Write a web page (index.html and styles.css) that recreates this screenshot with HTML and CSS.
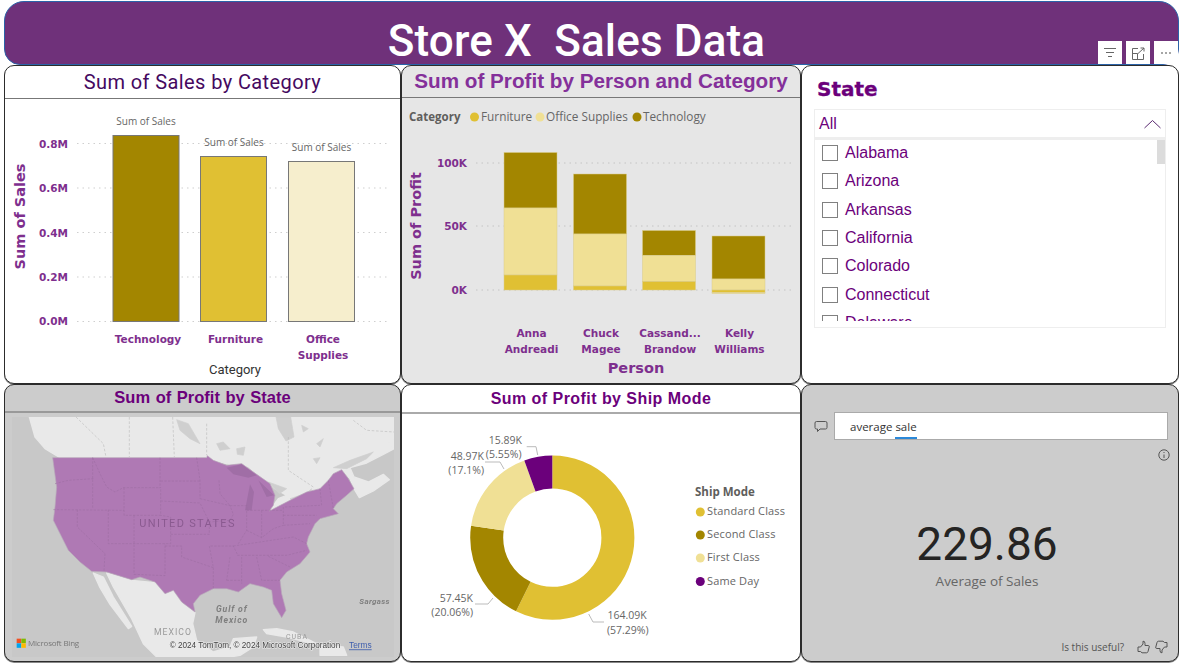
FILE: index.html
```html
<!DOCTYPE html>
<html lang="en">
<head>
<meta charset="utf-8">
<title>Store X Sales Data</title>
<link rel="stylesheet" href="styles.css">
</head>
<body>
<div class="page">
  <header class="banner">
    <h1 class="banner-title">Store X&nbsp; Sales Data</h1>
    <div class="visual-actions">
      <span class="action"><svg width="24" height="23" viewBox="0 0 24 23"><path class="ico" d="M6 7.5H18M8 11.5H16M10 15.5H14"/></svg></span>
      <span class="action"><svg width="24" height="23" viewBox="0 0 24 23"><path class="ico" d="M12 7.5H6.5V18.5H17.5V13M6.5 12.5H11.5V18.5M11.5 13L18 7M14.5 7H18V10.5"/></svg></span>
      <span class="action"><svg width="24" height="23" viewBox="0 0 24 23"><circle class="dot" cx="8" cy="12" r="1"/><circle class="dot" cx="12" cy="12" r="1"/><circle class="dot" cx="16" cy="12" r="1"/></svg></span>
    </div>
  </header>

  <main class="board">
    <section class="card">
      <h2 class="card-title title-din">Sum of Sales by Category</h2>
      <svg class="chart" width="395" height="284" viewBox="5 99 395 284">
        <g class="grid">
          <path d="M77 143.5H390M77 188H390M77 232.5H390M77 277H390M77 321.5H390"/>
        </g>
        <rect class="bar dk" x="113" y="135.5" width="66" height="186"/>
        <rect class="bar md" x="200.5" y="156.5" width="66" height="165"/>
        <rect class="bar pl" x="288.5" y="161.5" width="66" height="160"/>
        <g class="data-label">
          <text x="146" y="125">Sum of Sales</text>
          <text x="234" y="146">Sum of Sales</text>
          <text x="321.5" y="151">Sum of Sales</text>
        </g>
        <g class="tick end">
          <text x="68" y="147.5">0.8M</text>
          <text x="68" y="192">0.6M</text>
          <text x="68" y="236.5">0.4M</text>
          <text x="68" y="281">0.2M</text>
          <text x="68" y="325">0.0M</text>
        </g>
        <text class="axis-title" transform="translate(25 216.5) rotate(-90)">Sum of Sales</text>
        <g class="tick mid">
          <text x="148" y="343">Technology</text>
          <text x="235.5" y="343">Furniture</text>
          <text x="323" y="343">Office</text>
          <text x="323" y="359">Supplies</text>
        </g>
        <text class="axis-din" x="235" y="374">Category</text>
      </svg>
    </section>

    <section class="card card-light">
      <h2 class="card-title title-large">Sum of Profit by Person and Category</h2>
      <svg class="chart" width="398" height="285" viewBox="402 98 398 285">
        <g class="legend">
          <text class="legend-head" x="409" y="121">Category</text>
          <circle class="f-md" cx="474.5" cy="117" r="4.5"/>
          <text x="481" y="121">Furniture</text>
          <circle class="f-lt" cx="540" cy="117" r="4.5"/>
          <text x="546" y="121">Office Supplies</text>
          <circle class="f-dk" cx="637" cy="117" r="4.5"/>
          <text x="643" y="121">Technology</text>
        </g>
        <g class="grid"><path d="M476 163H795M476 226H795M476 290H795"/></g>
        <g class="stack">
          <rect class="f-dk" x="504" y="152.5" width="53" height="55.5"/>
          <rect class="f-lt" x="504" y="208" width="53" height="67"/>
          <rect class="f-md" x="504" y="275" width="53" height="15"/>
          <rect class="f-dk" x="573.5" y="174" width="53" height="60"/>
          <rect class="f-lt" x="573.5" y="234" width="53" height="52"/>
          <rect class="f-md" x="573.5" y="286" width="53" height="4"/>
          <rect class="f-dk" x="642.5" y="230.5" width="53" height="25"/>
          <rect class="f-lt" x="642.5" y="255.5" width="53" height="26"/>
          <rect class="f-md" x="642.5" y="281.5" width="53" height="8.5"/>
          <rect class="f-dk" x="712" y="236" width="53" height="43"/>
          <rect class="f-lt" x="712" y="279" width="53" height="11"/>
          <rect class="f-md" x="712" y="290" width="53" height="2.5"/>
          <rect class="f-lt" x="712" y="292.5" width="53" height="1"/>
        </g>
        <g class="tick end">
          <text x="467" y="167">100K</text>
          <text x="467" y="230">50K</text>
          <text x="467" y="294">0K</text>
        </g>
        <text class="axis-title" transform="translate(421 226) rotate(-90)">Sum of Profit</text>
        <g class="tick mid">
          <text x="531.5" y="337">Anna</text>
          <text x="531.5" y="353">Andreadi</text>
          <text x="601" y="337">Chuck</text>
          <text x="601" y="353">Magee</text>
          <text x="670" y="337">Cassand...</text>
          <text x="670" y="353">Brandow</text>
          <text x="739.5" y="337">Kelly</text>
          <text x="739.5" y="353">Williams</text>
        </g>
        <text class="axis-person" x="636" y="373">Person</text>
      </svg>
    </section>

    <section class="card slicer">
      <h2 class="slicer-title">State</h2>
      <div class="dropdown">
        <span>All</span>
        <svg width="17" height="10" viewBox="0 0 17 10"><path class="chev" d="M0.5 9L8.5 1.5L16.5 9"/></svg>
      </div>
      <div class="list">
        <div class="list-clip">
          <div class="row"><span class="box"></span>Alabama</div>
          <div class="row"><span class="box"></span>Arizona</div>
          <div class="row"><span class="box"></span>Arkansas</div>
          <div class="row"><span class="box"></span>California</div>
          <div class="row"><span class="box"></span>Colorado</div>
          <div class="row"><span class="box"></span>Connecticut</div>
          <div class="row"><span class="box"></span>Delaware</div>
        </div>
        <span class="thumb"></span>
      </div>
    </section>

    <section class="card card-grey">
      <h2 class="card-title title-map">Sum of Profit by State</h2>
      <div class="map-wrap">
        <svg class="map" width="382" height="240" viewBox="36 110 1146 720">
          <rect class="ocean" x="36" y="110" width="1146" height="720"/>
          <path class="land" d="M88 110L105 170L135 205L180 232L620 232L640 240L700 255L725 250L770 285L805 305L825 325L860 345L835 355L808 392L870 360L920 340L960 325L985 300L1000 280L1025 268L1050 295L1062 325L1078 352L1120 332L1168 298L1150 282L1105 305L1062 290L1050 262L1100 248L1150 222L1182 205V110Z"/>
          <path class="land" d="M280 578L310 590L340 650L395 738L385 745L330 672L300 622ZM320 578L395 600L465 607L495 642L520 632L545 667L585 697L578 730L590 780L640 815L690 800L700 775L770 770L760 800L720 825L690 830H470L430 790L395 715L340 620ZM790 748L830 745L880 755L950 790L920 785L860 770L800 760ZM960 795L1030 800L1040 825H960ZM1070 120L1110 150L1085 165L1060 140ZM1182 178V200L1165 190Z"/>
          <path class="water" d="M828 110H872L882 170L858 182L835 145ZM530 118L565 130L600 190L570 175L540 150ZM650 190L670 185L690 205L660 210ZM710 205L735 200L730 225L712 222ZM940 235L960 232L950 250ZM950 190L970 175L960 200ZM1000 262L1050 240L1120 215L1100 235L1040 265ZM680 258L725 250L770 285L745 262L720 256ZM805 305L860 325L838 340ZM870 355L920 338L935 325L925 345L880 360ZM905 135L925 145L910 155Z"/>
          <path class="border-ca" d="M228 110L310 190L318 230M388 110V230M518 110L523 230M620 130V225M865 170V270L940 320M1060 120L1100 150L1182 155"/>
          <path class="us" d="M158 232H620L622 226L640 240L680 255L725 250L770 282L790 296L810 310L825 345L820 375L808 392L870 360L920 335L960 325L985 300L1000 280L1025 268L1045 295L1062 325L1040 345L1010 370L1000 385L1015 400L960 415L945 430L925 470L920 490L930 515L900 550L860 575L840 600L845 640L858 690L845 712L820 670L815 630L790 620L750 610L715 635L680 625L640 625L600 645L580 670L585 695L545 665L520 630L495 640L465 605L420 590L395 598L320 575L275 573L240 545L205 510L175 450L160 420L165 380L170 320Z"/>
          <path class="us-lake" d="M680 262L725 252L770 285L745 292L700 282ZM750 312L735 390L755 390L762 335ZM775 300L822 345L800 350Z"/>
          <path class="state" d="M165 310L205 300L280 295M278 232V295V385M278 232L300 280L320 320L345 335L370 322H482M480 232V322M482 302H600M590 232L600 300V355M372 322V405H482V322M482 362L600 368L628 425M160 388L372 390M232 388V440L315 520M325 388V490H512V410L482 405M315 520L312 572M402 405V582M402 582L495 586V490M512 462H628V425M495 497H545V530L640 562L628 497H700L712 522M600 355L690 376L700 402L690 420L628 425M657 300L660 340L690 376M690 376H740V450L715 490M785 390V472M740 390H850M850 380V435M850 435L930 430M740 450L785 472L820 445L850 435M700 497L880 470L920 490M712 525H860L920 510M690 530L680 600M725 530V610M770 530L785 600L840 600M805 528L870 560M640 562V625M680 600H725M960 325L965 375M985 300L1000 385M850 405H950M855 380L960 375"/>
          <text class="map-us" x="418" y="441">UNITED STATES</text>
          <text class="map-sea" x="648" y="696">Gulf of</text>
          <text class="map-sea" x="646" y="727">Mexico</text>
          <text class="map-sea map-sargasso" x="1078" y="672">Sargass</text>
          <text class="map-country" x="462" y="763">MEXICO</text>
          <text class="map-country small" x="858" y="775">CUBA</text>
          <rect class="ms-r" x="50" y="775" width="13.5" height="13.5"/>
          <rect class="ms-g" x="64" y="775" width="13.5" height="13.5"/>
          <rect class="ms-b" x="50" y="789" width="13.5" height="13.5"/>
          <rect class="ms-y" x="64" y="789" width="13.5" height="13.5"/>
          <text class="map-bing" x="84" y="798">Microsoft Bing</text>
          <text class="map-copy" x="509" y="804">© 2024 TomTom, © 2024 Microsoft Corporation</text>
          <text class="map-terms" x="1047" y="804">Terms</text>
        </svg>
      </div>
    </section>

    <section class="card">
      <h2 class="card-title title-donut">Sum of Profit by Ship Mode</h2>
      <svg class="chart" width="398" height="248" viewBox="402 413 398 248">
        <g class="donut">
          <circle class="seg s-md" cx="552.3" cy="536.7" r="65.6" pathLength="100" stroke-dasharray="57.29 42.71" stroke-dashoffset="0"/>
          <circle class="seg s-dk" cx="552.3" cy="536.7" r="65.6" pathLength="100" stroke-dasharray="20.06 79.94" stroke-dashoffset="-57.29"/>
          <circle class="seg s-lt" cx="552.3" cy="536.7" r="65.6" pathLength="100" stroke-dasharray="17.1 82.9" stroke-dashoffset="-77.35"/>
          <circle class="seg s-pu" cx="552.3" cy="536.7" r="65.6" pathLength="100" stroke-dasharray="5.55 94.45" stroke-dashoffset="-94.45"/>
        </g>
        <path class="leader" d="M526.7 445.7H536L537.7 454M485 461H500L504 468M475 603H488L493 597M604 621H593L588.7 613"/>
        <g class="donut-label end">
          <text x="522" y="443">15.89K</text>
          <text x="521.5" y="457">(5.55%)</text>
          <text x="484" y="459">48.97K</text>
          <text x="484" y="473">(17.1%)</text>
          <text x="473" y="601">57.45K</text>
          <text x="473" y="615">(20.06%)</text>
        </g>
        <g class="donut-label">
          <text x="607.5" y="618">164.09K</text>
          <text x="607" y="633">(57.29%)</text>
        </g>
        <text class="legend-head dl" x="695" y="495">Ship Mode</text>
        <circle class="f-md" cx="700.3" cy="511" r="4.5"/>
        <circle class="f-dk" cx="700.3" cy="534" r="4.5"/>
        <circle class="f-lt" cx="700.3" cy="557" r="4.5"/>
        <circle class="f-pu" cx="700.3" cy="580.5" r="4.5"/>
        <g class="donut-legend">
          <text x="707" y="514">Standard Class</text>
          <text x="707" y="537">Second Class</text>
          <text x="707" y="560">First Class</text>
          <text x="707" y="584">Same Day</text>
        </g>
      </svg>
    </section>

    <section class="card card-grey qna">
      <div class="ask">
        <svg width="14" height="13" viewBox="0 0 14 13"><path class="q-ico" d="M2.5 1.5H11.5Q13 1.5 13 3V7.5Q13 9 11.5 9H6L3.5 11.5V9H2.5Q1 9 1 7.5V3Q1 1.5 2.5 1.5Z"/></svg>
        <div class="ask-box">average <span class="squiggle">sale</span></div>
      </div>
      <div class="info-row">
        <svg width="12" height="12" viewBox="0 0 12 12"><circle class="q-ico" cx="6" cy="6" r="5.2"/><path class="q-ico" d="M6 5.5V9M6 3V4"/></svg>
      </div>
      <div class="kpi">
        <div class="kpi-value">229.86</div>
        <div class="kpi-label">Average of Sales</div>
      </div>
      <div class="feedback">
        <span>Is this useful?</span>
        <svg width="13" height="14" viewBox="0 0 13 14"><path class="q-ico" d="M1 7H3.5L6 4V1.2Q8 1 8 3.5V5.5H11.5Q12.5 5.6 12.2 7L11 11.5Q10.7 12.8 9.5 12.8H5L3.5 11.5H1Z"/></svg>
        <svg width="13" height="14" viewBox="0 0 13 14"><path class="q-ico" d="M12 7H9.5L7 10V12.8Q5 13 5 10.5V8.5H1.5Q0.5 8.4 0.8 7L2 2.5Q2.3 1.2 3.5 1.2H8L9.5 2.5H12Z"/></svg>
      </div>
    </section>
  </main>
</div>
</body>
</html>
```
FILE: styles.css
```css
* { box-sizing: border-box; }
html, body { margin: 0; padding: 0; background: #fff; }
.page { width: 1183px; height: 664px; padding: 1px 4px 0; overflow: hidden; }

.banner {
  position: relative;
  height: 64px;
  background: #6f317a;
  border: 1px solid #2b63a8;
  border-radius: 20px 20px 16px 16px;
  display: flex;
  justify-content: center;
  padding-right: 30px;
}
.banner-title {
  margin: 14px 0 0;
  color: #fff;
  font: 500 44px/50px Roboto, sans-serif;
  letter-spacing: .15px;
  white-space: nowrap;
}
.visual-actions { position: absolute; right: 0; top: 39px; display: flex; gap: 4px; }
.action { width: 24px; height: 23px; background: #fff; display: block; }
.action svg { display: block; }
.ico { fill: none; stroke: #666; stroke-width: 1; }
.dot { fill: #888; }

.board { display: grid; grid-template-columns: 397px 400px 378px; grid-template-rows: 319px 278px; }
.card {
  background: #fff;
  border: 1px solid #2c2c2c;
  border-radius: 10px;
  box-shadow: 0 1px 0 #888;
  overflow: hidden;
  display: flex;
  flex-direction: column;
}
.card-light { background: #e6e6e6; }
.card-grey { background: #cccccc; }
.card-title { margin: 0; text-align: center; border-bottom: 1px solid #777; flex: none; }
.title-din { height: 33px; font: 400 20px/33px Roboto, sans-serif; color: #45095f; letter-spacing: .4px; }
.title-large { height: 32px; font: 700 20.7px/30px "Liberation Sans", sans-serif; color: #84309a; }
.title-map { height: 28px; font: 700 16.5px/25px "Liberation Sans", sans-serif; color: #6b007b; border-bottom: 2px solid #999; word-spacing: 1px; }
.title-donut { height: 29px; font: 700 16px/27px "Liberation Sans", sans-serif; color: #6b007b; border-bottom: 2px solid #aaa; letter-spacing: .45px; }

.chart { display: block; flex: none; }
.chart text { font-family: "Liberation Sans", sans-serif; }
.grid path { fill: none; stroke: #cfcfcf; stroke-width: 1; stroke-dasharray: 1.5 4; }
.card-light .grid path { stroke: #c4c4c4; }
.bar { stroke: #777; stroke-width: 1; }
.dk { fill: #a38600; }
.md { fill: #e0c033; }
.pl { fill: #f6eecd; }
.f-dk { fill: #a38600; }
.f-md { fill: #e0c033; }
.f-lt { fill: #f0e095; }
.f-pu { fill: #6b007b; }
.stack rect { stroke: #d9cc8a; stroke-width: .5; }
.chart .data-label text { font: 400 10px "Open Sans", sans-serif; fill: #666; text-anchor: middle; }
.chart .tick text { font: 700 10.5px "DejaVu Sans", sans-serif; fill: #7e2f8e; }
.tick.end text { text-anchor: end; }
.tick.mid text { text-anchor: middle; }
.chart .axis-title { font: 700 14.5px "DejaVu Sans", sans-serif; fill: #7e2f8e; text-anchor: middle; }
.chart .axis-din { font: 400 13px Roboto, sans-serif; fill: #333; text-anchor: middle; }
.chart .axis-person { font: 700 14.5px "DejaVu Sans", sans-serif; fill: #7e2f8e; text-anchor: middle; }
.chart .legend text { font: 400 11.8px "Open Sans", sans-serif; fill: #666; }
.chart .legend-head, .chart .legend .legend-head { font: 700 11.5px "Open Sans", sans-serif; fill: #605e5c; }

.slicer { padding: 0 12px; }
.slicer-title {
  margin: 10px 0 6px 3px;
  font: 700 20px/27px "DejaVu Sans", sans-serif;
  color: #6b007b;
  -webkit-text-stroke: .3px #6b007b;
}
.dropdown {
  height: 29px;
  width: 352px;
  border: 1px solid #eee;
  padding: 0 4px;
  display: flex;
  justify-content: space-between;
  align-items: center;
  font: 400 16px "Liberation Sans", sans-serif;
  color: #6b007b;
}
.chev { fill: none; stroke: #5a2a70; stroke-width: 1; }
.list {
  position: relative;
  width: 352px;
  height: 190px;
  border: 1px solid #eee;
  border-top-width: 2px;
}
.list-clip { height: 182px; overflow: hidden; margin-top: -1px; }
.row {
  height: 28.3px;
  display: flex;
  align-items: center;
  padding-left: 7px;
  font: 400 16px "Liberation Sans", sans-serif;
  color: #6b007b;
}
.box { width: 16px; height: 16px; border: 1px solid #808080; margin-right: 7px; background: #fff; flex: none; }
.thumb { position: absolute; top: 0; right: 0; width: 8px; height: 24px; background: #dcdcdc; }

.map-wrap { padding: 4px 0 0 7px; flex: none; }
.map { display: block; filter: blur(.35px); }
.ocean { fill: #c8c8c8; }
.land { fill: #e9e9e9; stroke: #e9e9e9; stroke-width: 4; stroke-linejoin: round; }
.water { fill: #cfcfcf; stroke: #cfcfcf; stroke-width: 2; stroke-linejoin: round; }
.border-ca { fill: none; stroke: #b0b0b0; stroke-width: 1.5; stroke-dasharray: 8 5; }
.us { fill: #af79b4; stroke: #b8a8ba; stroke-width: 2; stroke-linejoin: round; }
.us-lake { fill: #a06ea6; }
.state { fill: none; stroke: #9a6ca0; stroke-width: 1.6; stroke-dasharray: 7 4; }
.map-us { font: 400 33px Roboto, sans-serif; letter-spacing: 4px; fill: #8a5a90; }
.map-sea { font: italic 700 26px Roboto, sans-serif; letter-spacing: 2.6px; fill: #7f7f7f; }
.map-sargasso { font-size: 24px; letter-spacing: 1px; }
.map-country { font: 400 26px Roboto, sans-serif; letter-spacing: 3px; fill: #9a9a9a; }
.map-country.small { font-size: 21px; }
.ms-r { fill: #f25022; }
.ms-g { fill: #7fba00; }
.ms-b { fill: #00a4ef; }
.ms-y { fill: #ffb900; }
.map-bing { font: 400 24px "Open Sans", sans-serif; fill: #787878; letter-spacing: -.6px; }
.map-copy { font: 400 24.5px "Liberation Sans", sans-serif; fill: #444; stroke: #eee; stroke-width: 3px; paint-order: stroke; }
.map-terms { font: 400 25px "Liberation Sans", sans-serif; fill: #3f5fae; text-decoration: underline; }

.seg { fill: none; stroke-width: 33; transform: rotate(-90deg); transform-origin: 552.3px 536.7px; }
.s-md { stroke: #e0c033; }
.s-dk { stroke: #a38600; }
.s-lt { stroke: #f0e095; }
.s-pu { stroke: #6b007b; }
.leader { fill: none; stroke: #bbb; stroke-width: 1; }
.chart .donut-label text { font: 400 10.5px "Open Sans", sans-serif; fill: #666; }
.donut-label.end text { text-anchor: end; }
.chart .donut-legend text { font: 400 11px "Open Sans", sans-serif; fill: #666; letter-spacing: .15px; }

.qna { font-family: "Open Sans", sans-serif; }
.ask { display: flex; align-items: center; gap: 6px; padding: 27px 10px 0 12px; }
.ask-box {
  flex: 1;
  height: 28px;
  background: #fff;
  border: 1px solid #aaa;
  padding-left: 15px;
  font-size: 11.5px;
  line-height: 28px;
  color: #333;
}
.squiggle { display: inline-block; line-height: 21px; border-bottom: 2px solid #2b88d8; }
.q-ico { fill: none; stroke: #555; stroke-width: 1; }
.info-row { display: flex; justify-content: flex-end; padding: 9px 8px 0 0; }
.info-row svg { display: block; }
.kpi { flex: 1; display: flex; flex-direction: column; align-items: center; padding-right: 6px; }
.kpi-value { margin-top: 55px; font: 400 46px/56px Roboto, sans-serif; color: #252423; }
.kpi-label { font-size: 13.5px; line-height: 20px; color: #666; margin-top: -1px; }
.feedback { display: flex; align-items: center; justify-content: flex-end; gap: 5px; padding: 0 10px 7px 0; font-size: 10px; color: #555; }
.feedback span { margin-right: 8px; }
```
